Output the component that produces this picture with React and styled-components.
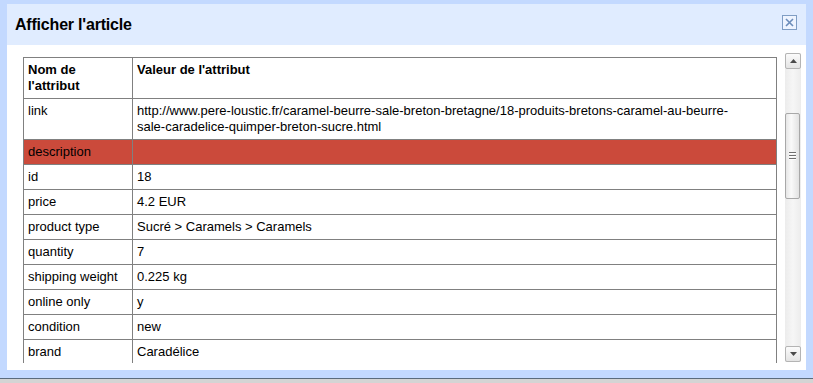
import React from 'react';
import styled, { createGlobalStyle } from 'styled-components';

const GlobalStyle = createGlobalStyle`
	html, body {
		margin: 0;
		padding: 0;
		background: #d4d4d4;
		font-family: "Liberation Sans", Arial, sans-serif;
	}
`;

const rows = [
	{ name: 'link', value: 'http://www.pere-loustic.fr/caramel-beurre-sale-breton-bretagne/18-produits-bretons-caramel-au-beurre-sale-caradelice-quimper-breton-sucre.html' },
	{ name: 'description', value: '', error: true },
	{ name: 'id', value: '18' },
	{ name: 'price', value: '4.2 EUR' },
	{ name: 'product type', value: 'Sucré > Caramels > Caramels' },
	{ name: 'quantity', value: '7' },
	{ name: 'shipping weight', value: '0.225 kg' },
	{ name: 'online only', value: 'y' },
	{ name: 'condition', value: 'new' },
	{ name: 'brand', value: 'Caradélice' },
];

const CloseIcon = () => (
	<svg width="15" height="15" viewBox="0 0 15 15">
		<rect x="0.5" y="0.5" width="14" height="14" fill="#eef4ff" stroke="#7f9dc4" />
		<path d="M4 4 L11 11 M11 4 L4 11" stroke="#6b8cba" strokeWidth="1.6" />
	</svg>
);

const Arrow = ({ up }) => (
	<svg width="7" height="4" viewBox="0 0 7 4">
		<path d={up ? 'M0 4 L3.5 0 L7 4 Z' : 'M0 0 L3.5 4 L7 0 Z'} fill="#4a4a4a" />
	</svg>
);

const App = () => {
	return (
		<>
			<GlobalStyle />
			<Frame>
				<Dialog>
					<Header>
						<Title>Afficher l'article</Title>
						<CloseButton aria-label="Fermer">
							<CloseIcon />
						</CloseButton>
					</Header>
					<Body>
						<Viewport>
							<Table>
								<colgroup>
									<col style={{ width: 109 }} />
									<col />
								</colgroup>
								<thead>
									<tr>
										<Th>Nom de l'attribut</Th>
										<Th>Valeur de l'attribut</Th>
									</tr>
								</thead>
								<tbody>
									{rows.map((row) => (
										<Row key={row.name} $error={row.error}>
											<Td>{row.name}</Td>
											<Td $value>{row.value}</Td>
										</Row>
									))}
								</tbody>
							</Table>
						</Viewport>
						<Scrollbar>
							<ScrollButton>
								<Arrow up />
							</ScrollButton>
							<Track>
								<Thumb>
									<Grip />
									<Grip />
									<Grip />
								</Thumb>
							</Track>
							<ScrollButton>
								<Arrow />
							</ScrollButton>
						</Scrollbar>
					</Body>
				</Dialog>
			</Frame>
		</>
	);
};

const Frame = styled.div`
	box-sizing: border-box;
	height: 379px;
	padding: 4px 7px 8px 7px;
	background: #c3d9ff;
	border-bottom: 1px solid #5b6b7c;
`;
const Dialog = styled.div`
	display: flex;
	flex-direction: column;
	height: 100%;
`;
const Header = styled.div`
	display: flex;
	align-items: center;
	justify-content: space-between;
	height: 41px;
	padding: 0 9px 0 8px;
	background: #e0ecff;
`;
const Title = styled.h1`
	margin: 0;
	padding-top: 1px;
	font-size: 16px;
	font-weight: bold;
	color: #000;
	letter-spacing: -0.2px;
`;
const CloseButton = styled.div`
	display: flex;
	width: 15px;
	height: 15px;
	margin-bottom: 4px;
`;
const Body = styled.div`
	flex: 1;
	display: flex;
	gap: 8px;
	padding: 8px 5px 7px 16px;
	background: #fff;
	min-height: 0;
`;
const Viewport = styled.div`
	flex: 1;
	overflow: hidden;
	padding-top: 4px;
`;
const Table = styled.table`
	width: 754px;
	border-collapse: collapse;
	table-layout: fixed;
	font-size: 13px;
	line-height: 16px;
	color: #000;
`;
const Th = styled.th`
	padding: 4px 4px;
	border: 1px solid #808080;
	text-align: left;
	vertical-align: top;
	font-weight: bold;
`;
const Row = styled.tr`
	background: ${(p) => (p.$error ? '#cb4a3b' : '#fff')};
`;
const Td = styled.td`
	padding: 4px ${(p) => (p.$value ? '30px' : '4px')} 4px 4px;
	border: 1px solid #808080;
	vertical-align: top;
	word-wrap: break-word;
`;
const Scrollbar = styled.div`
	display: flex;
	flex-direction: column;
	width: 16px;
	height: 309px;
	background: linear-gradient(to right, #ececec, #f6f6f6 50%, #ececec);
`;
const ScrollButton = styled.div`
	box-sizing: border-box;
	display: flex;
	align-items: center;
	justify-content: center;
	height: 16px;
	border: 1px solid #b4b4b4;
	border-radius: 2px;
	background: linear-gradient(to bottom, #fbfbfb, #e4e4e4);
`;
const Track = styled.div`
	flex: 1;
	padding-top: 44px;
`;
const Thumb = styled.div`
	box-sizing: border-box;
	display: flex;
	flex-direction: column;
	align-items: center;
	justify-content: center;
	gap: 1px;
	width: 15px;
	height: 86px;
	border: 1px solid #a8a8a8;
	border-radius: 2px;
	background: linear-gradient(to right, #e6e6e6, #fafafa 40%, #e2e2e2);
`;
const Grip = styled.span`
	display: block;
	width: 7px;
	height: 1px;
	background: #707070;
	border-bottom: 1px solid #fff;
`;

export default App;
